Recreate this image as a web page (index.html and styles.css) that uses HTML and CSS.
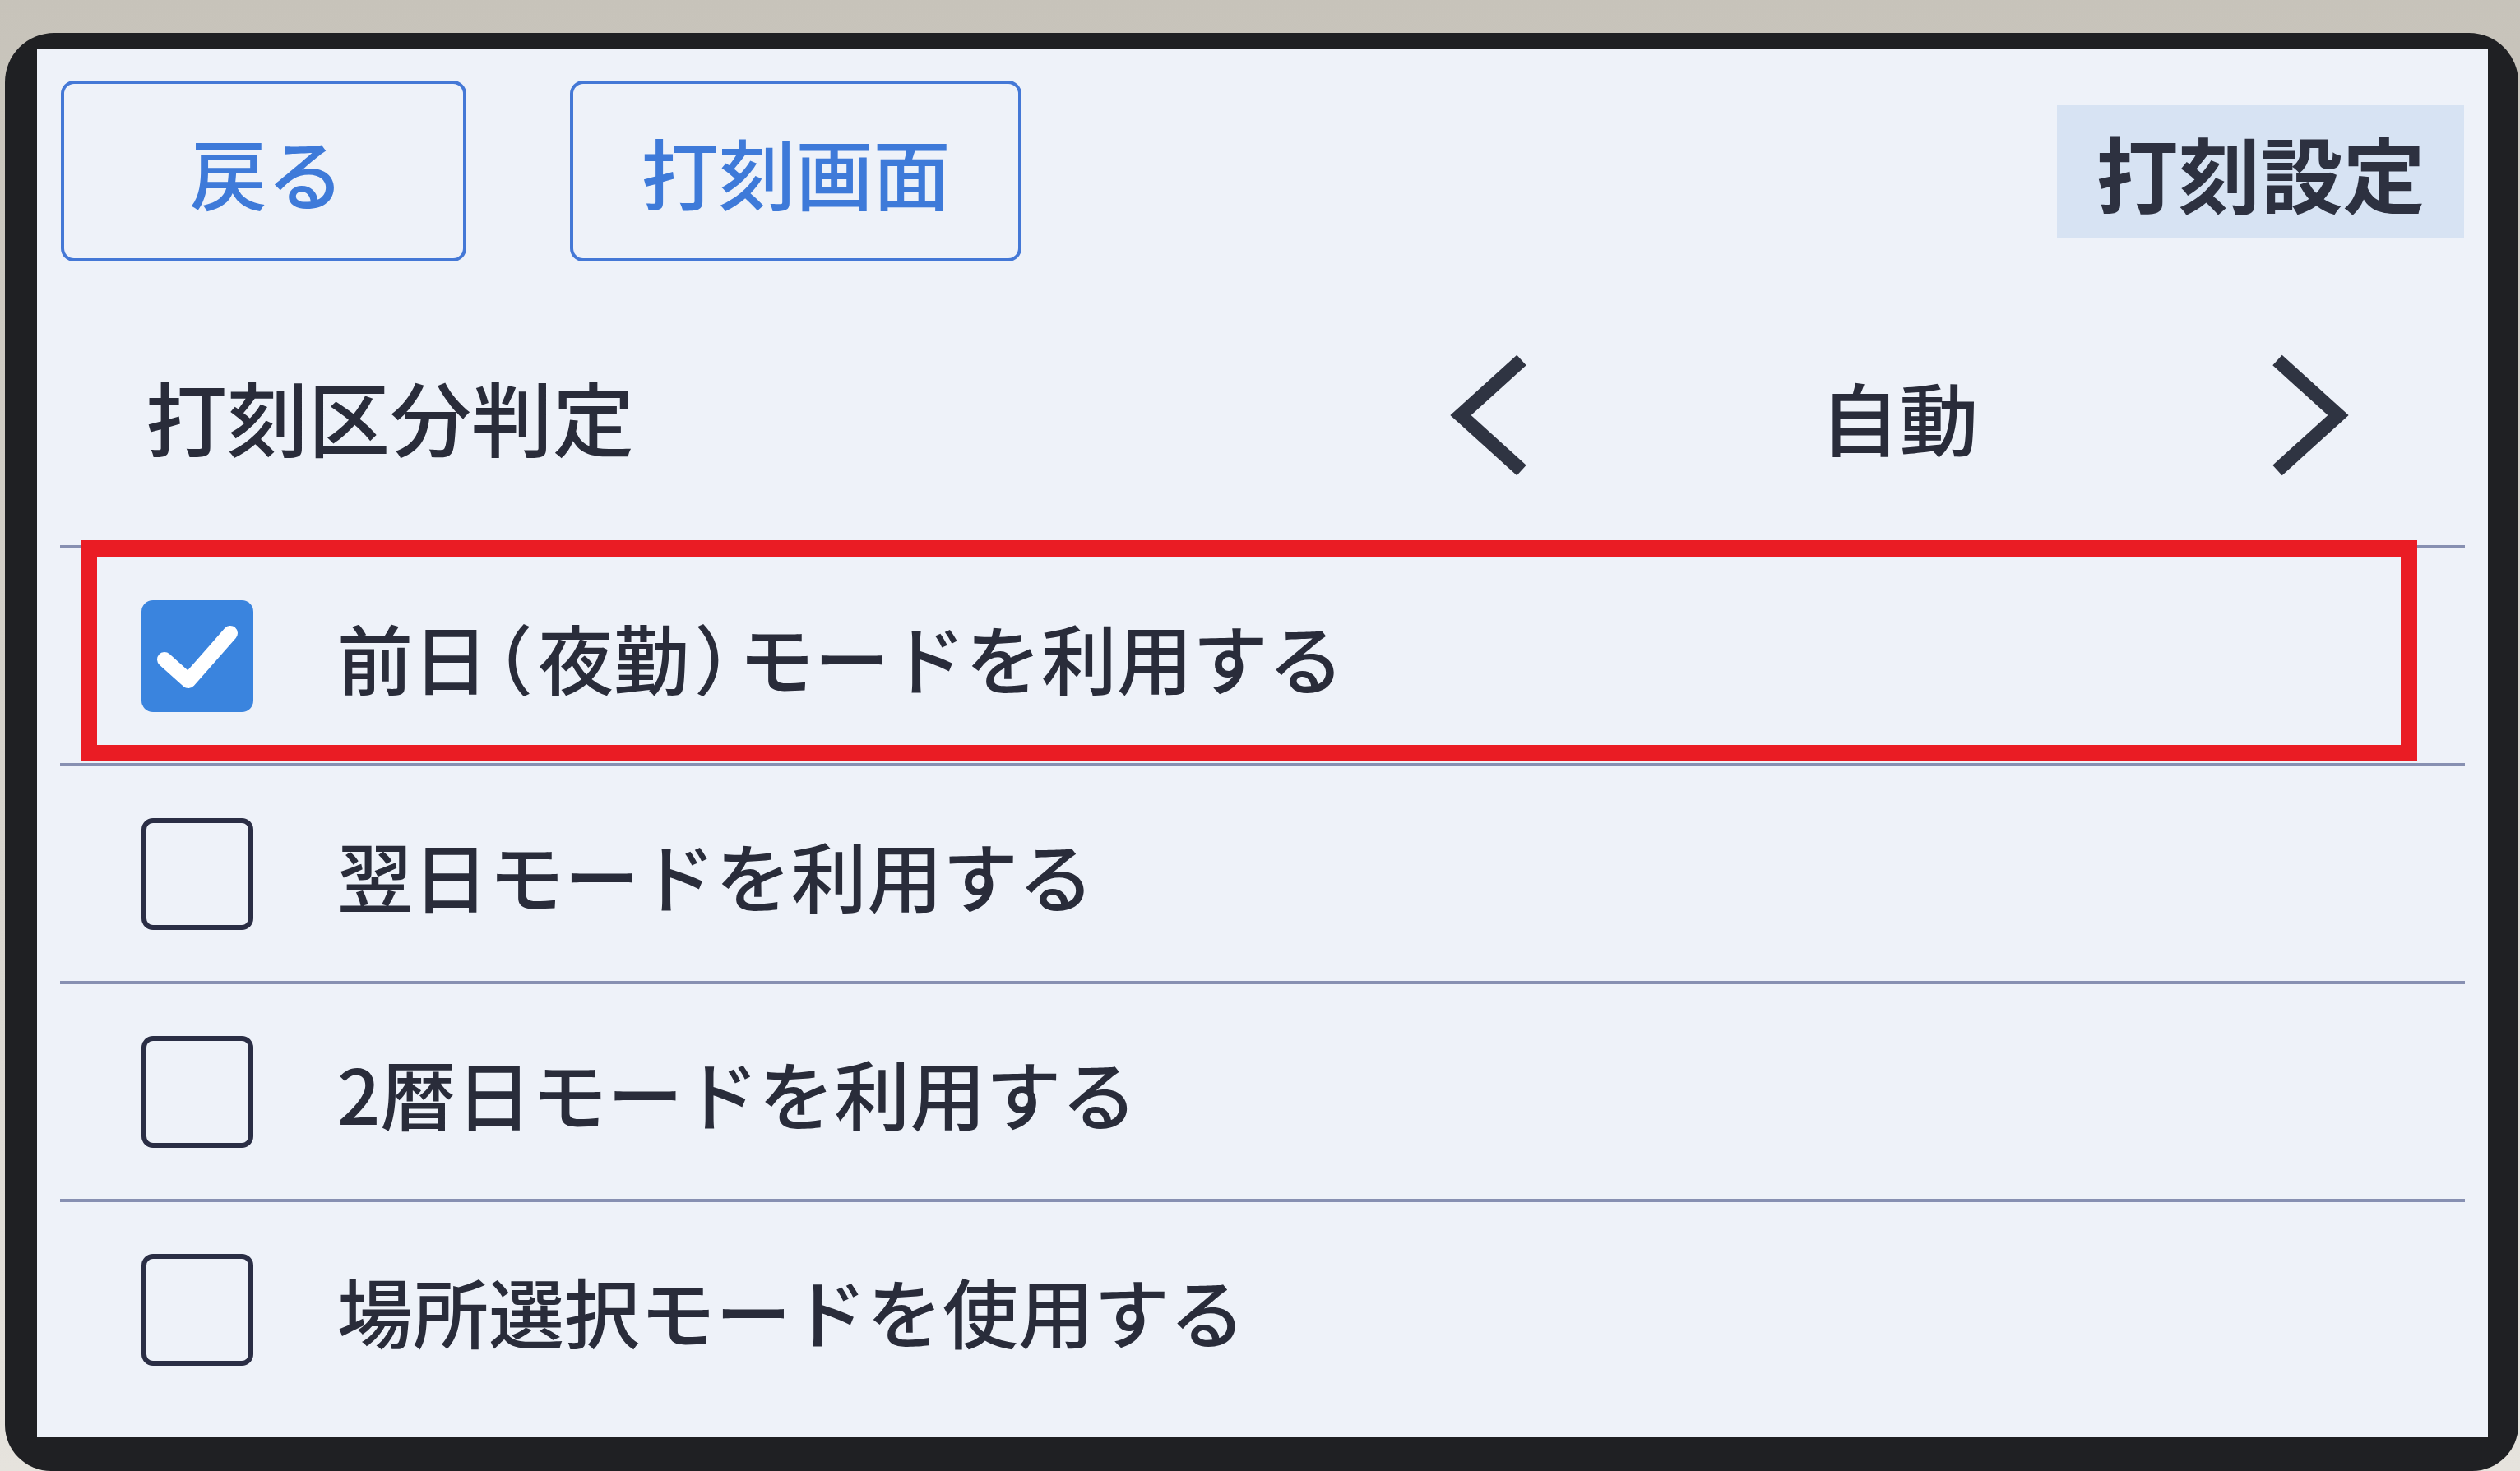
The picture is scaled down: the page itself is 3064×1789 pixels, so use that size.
FILE: index.html
```html
<!DOCTYPE html>
<html lang="ja">
<head>
  <meta charset="UTF-8" />
  <meta name="viewport" content="width=device-width, initial-scale=1.0"/>
  <title>打刻設定</title>
  <link rel="stylesheet" href="styles.css">
</head>
<body>
  <div class="bezel">
    <div class="screen">
      <header class="topbar">
        <button class="nav-btn back">戻る</button>
        <button class="nav-btn punch">打刻画面</button>
        <div class="title">打刻設定</div>
      </header>

      <div class="picker-row">
        <span class="label">打刻区分判定</span>
        <div class="picker">
          <button class="arrow">
            <svg viewBox="0 0 100 150" width="100" height="150"><path d="M88 8 L14 75 L88 142" /></svg>
          </button>
          <span class="value">自動</span>
          <button class="arrow">
            <svg viewBox="0 0 100 150" width="100" height="150"><path d="M12 8 L86 75 L12 142" /></svg>
          </button>
        </div>
      </div>

      <ul class="options">
        <li class="option">
          <span class="box checked">
            <svg viewBox="0 0 136 136" width="136" height="136"><polyline points="28,72 57,98 108,40" /></svg>
          </span>
          <span class="opt-text">前日<span class="paren open">（</span>夜勤<span class="paren close">）</span>モードを利用する</span>
          <span class="highlight"></span>
        </li>
        <li class="option">
          <span class="box"></span>
          <span class="opt-text">翌日モードを利用する</span>
        </li>
        <li class="option">
          <span class="box"></span>
          <span class="opt-text">2暦日モードを利用する</span>
        </li>
        <li class="option">
          <span class="box"></span>
          <span class="opt-text">場所選択モードを使用する</span>
        </li>
      </ul>
    </div>
  </div>
</body>
</html>
```

FILE: styles.css
```css
html, body {
  margin: 0;
  height: 100%;
}
body {
  font-family: "Noto Sans CJK JP", "Noto Sans", sans-serif;
  background: linear-gradient(#c7c3ba, #d8d5ce 60%, #e6e3dd);
  overflow: hidden;
}
.bezel {
  box-sizing: border-box;
  margin: 40px 2px 0 6px;
  height: 1749px;
  padding: 19px 37px 41px 39px;
  background: #1f2023;
  border-radius: 60px 60px 56px 56px;
}
.screen {
  height: 100%;
  background: #eef2f9;
  color: #292c3a;
}

/* top bar */
.topbar {
  display: flex;
  align-items: center;
  padding: 39px 29px 0;
}
.nav-btn {
  box-sizing: border-box;
  height: 220px;
  background: transparent;
  border: 4px solid #4478d6;
  border-radius: 16px;
  color: #3e7ad9;
  font-family: inherit;
  font-size: 94px;
  font-weight: 500;
  padding: 0;
}
.back {
  width: 493px;
  padding-left: 8px;
}
.punch {
  width: 549px;
  margin-left: 126px;
}
.title {
  margin-left: auto;
  width: 495px;
  height: 161px;
  background: #d7e3f3;
  display: flex;
  align-items: center;
  justify-content: center;
  font-size: 100px;
  font-weight: 700;
  color: #2d3140;
}

/* 打刻区分判定 */
.picker-row {
  box-sizing: border-box;
  display: flex;
  align-items: center;
  height: 308px;
  margin: 37px 28px 0;
  padding: 0 140px 8px 104px;
}
.label {
  font-size: 99px;
  font-weight: 500;
}
.picker {
  margin-left: auto;
  width: 1095px;
  display: flex;
  align-items: center;
}
.arrow {
  background: none;
  border: none;
  padding: 0;
  width: 100px;
  height: 150px;
}
.arrow svg {
  display: block;
}
.arrow path {
  fill: none;
  stroke: #2f3442;
  stroke-width: 17;
}
.value {
  flex: 1;
  text-align: center;
  font-size: 96px;
  font-weight: 500;
}

/* options */
.options {
  list-style: none;
  margin: 0 28px;
  padding: 0;
}
.option {
  position: relative;
  box-sizing: border-box;
  height: 265px;
  border-top: 4px solid #8790b2;
  display: flex;
  align-items: center;
  padding-left: 99px;
}
.box {
  box-sizing: border-box;
  width: 136px;
  height: 136px;
  border: 6px solid #2a2e45;
  border-radius: 14px;
  flex-shrink: 0;
}
.box.checked {
  border: none;
  background: #3a84de;
}
.box svg {
  display: block;
}
.box polyline {
  fill: none;
  stroke: #fff;
  stroke-width: 18;
  stroke-linecap: round;
  stroke-linejoin: round;
}
.opt-text {
  margin-left: 102px;
  font-size: 92px;
  font-weight: 500;
  white-space: nowrap;
}
.paren {
  font-feature-settings: "halt" 1;
}
.paren.open {
  padding: 0 6px 0 8px;
}
.paren.close {
  padding: 0 8px 0 6px;
}

/* red annotation frame */
.highlight {
  position: absolute;
  top: -10px;
  bottom: 2px;
  left: 25px;
  right: 58px;
  border: 20px solid #ea1c24;
}
```
